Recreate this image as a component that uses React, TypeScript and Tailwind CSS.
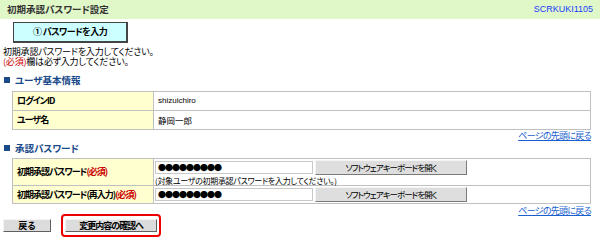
import React from "react";

const F = { fontFamily: '"Noto Sans CJK JP", "Noto Sans", sans-serif', fontFeatureSettings: '"palt"' } as React.CSSProperties;
const L = { fontFamily: '"Liberation Sans", Arial, sans-serif' } as React.CSSProperties;

function Req() {
  return <span className="text-[#cc0000]">(必須)</span>;
}

function SoftBtn() {
  return (
    <div className="ml-[2px] flex h-[15px] w-[152px] items-center justify-center whitespace-nowrap border border-t-[#f4f4f4] border-l-[#f4f4f4] border-b-[#7a7a7a] border-r-[#7a7a7a] bg-[#dedede] text-[8.5px] leading-none tracking-[-1px] text-black">
      ソフトウェアキーボードを開く
    </div>
  );
}

function PwInput() {
  return (
    <div className="flex h-[13px] w-[158px] items-center overflow-hidden whitespace-nowrap border border-[#c8c8c8] bg-white pl-[2px] text-[8px] leading-none tracking-[-1px] text-black">
      ●●●●●●●●●
    </div>
  );
}

function Heading({ children }: { children: React.ReactNode }) {
  return (
    <div className="flex h-[12px] items-center pl-[4px] text-[9.5px] font-bold text-[#1a4a8a]">
      <span className="mr-[5px] inline-block h-[6px] w-[6px] bg-[#1a4a8a]" />
      {children}
    </div>
  );
}

function TopLink() {
  return (
    <div className="mr-[9px] flex h-[11px] items-center justify-end whitespace-nowrap text-[9px] leading-none tracking-[-0.7px] text-[#1a5fd0] underline">
      ページの先頭に戻る
    </div>
  );
}

export default function App() {
  return (
    <div style={F} className="h-[246px] w-[600px] overflow-hidden bg-white text-[9px] text-black">
      <div className="flex h-[19px] items-center justify-between bg-[#e0f8c8] pl-[7px] pr-[7px]">
        <span className="text-[9.5px] font-bold text-[#333]">初期承認パスワード設定</span>
        <span className="text-[9px] text-[#1a3cff]" style={L}>SCRKUKI1105</span>
      </div>
      <div className="ml-[13px] mt-[3px] flex h-[21px] w-[115px] items-center justify-center whitespace-nowrap border border-[#444] border-b-2 border-r-2 bg-[#ccffff] text-[9px] font-bold tracking-[-0.6px]">
        ① パスワードを入力
      </div>
      <div className="mt-[4px] pl-[3px] text-[9px] leading-[10px] tracking-[-0.2px]">
        <div className="h-[10px]">初期承認パスワードを入力してください。</div>
        <div className="h-[10px]">
          <Req />欄は必ず入力してください。
        </div>
      </div>
      <div className="mt-[7px]">
        <Heading>ユーザ基本情報</Heading>
      </div>
      <div className="ml-[12px] mr-[9px] mt-[5px] border border-[#c0c0c0]">
        <div className="flex h-[19px] border-b border-[#c0c0c0]">
          <div className="flex w-[141px] items-center whitespace-nowrap border-r border-[#c0c0c0] bg-[#ffffd0] pl-[4px] font-bold tracking-[-1px]">ログインID</div>
          <div className="flex items-center pl-[4px] text-[8px]" style={L}>shizuichiro</div>
        </div>
        <div className="flex h-[18px]">
          <div className="flex w-[141px] items-center whitespace-nowrap border-r border-[#c0c0c0] bg-[#ffffd0] pl-[4px] font-bold tracking-[-1px]">ユーザ名</div>
          <div className="flex items-center pl-[4px] text-[8.5px]">静岡一郎</div>
        </div>
      </div>
      <TopLink />
      <div className="mt-[1px]">
        <Heading>承認パスワード</Heading>
      </div>
      <div className="ml-[12px] mr-[9px] mt-[4px] border border-[#c0c0c0]">
        <div className="flex h-[27px] border-b border-[#c0c0c0]">
          <div className="flex w-[141px] items-center whitespace-nowrap border-r border-[#c0c0c0] bg-[#ffffd0] pl-[4px] font-bold tracking-[-1px]">
            初期承認パスワード<Req />
          </div>
          <div className="flex flex-col pl-[1px] pt-[1px]">
            <div className="flex items-center">
              <PwInput />
              <SoftBtn />
            </div>
            <div className="mt-[1px] whitespace-nowrap text-[8px] leading-[9px] tracking-[-0.3px]">(対象ユーザの初期承認パスワードを入力してください。)</div>
          </div>
        </div>
        <div className="flex h-[17px]">
          <div className="flex w-[141px] items-center whitespace-nowrap border-r border-[#c0c0c0] bg-[#ffffd0] pl-[4px] font-bold tracking-[-1px]">
            初期承認パスワード(再入力)<Req />
          </div>
          <div className="flex items-center pl-[1px]">
            <PwInput />
            <SoftBtn />
          </div>
        </div>
      </div>
      <div className="mt-[1px]">
        <TopLink />
      </div>
      <div className="-mt-[2px] flex items-center pl-[3px]">
        <div className="flex h-[13px] w-[48px] items-center justify-center border border-t-[#f4f4f4] border-l-[#f4f4f4] border-b-[#606060] border-r-[#606060] bg-[#dcdcdc] font-bold">戻る</div>
        <div className="ml-[10px] rounded-[4px] border-2 border-[#ee0000] px-[2px] py-[3px]">
          <div className="flex h-[13px] w-[92px] items-center justify-center whitespace-nowrap border border-t-[#f4f4f4] border-l-[#f4f4f4] border-b-[#606060] border-r-[#606060] bg-[#dcdcdc] font-bold tracking-[-1px]">変更内容の確認へ</div>
        </div>
      </div>
    </div>
  );
}
